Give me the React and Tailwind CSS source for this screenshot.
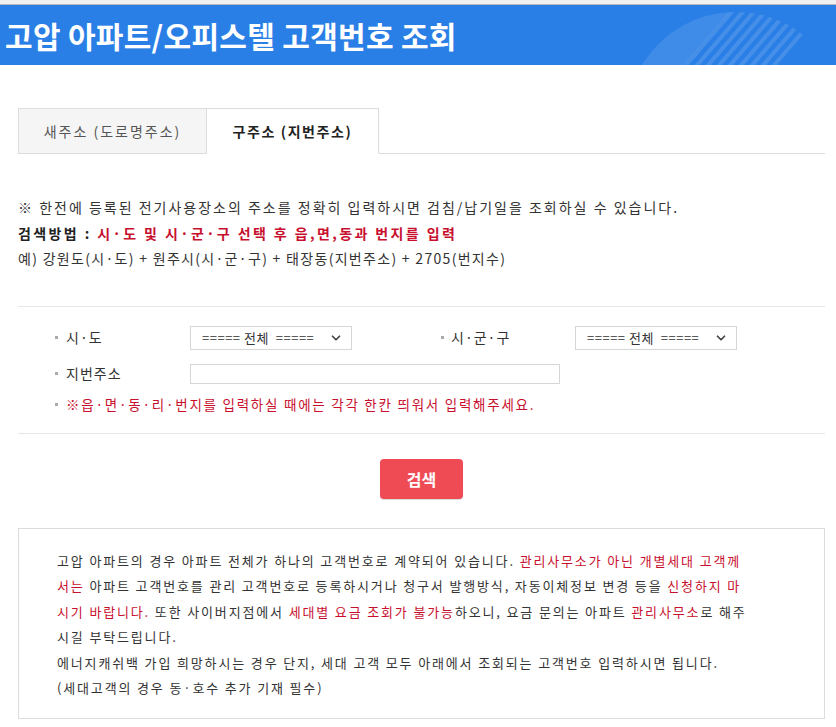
import { ChevronDown } from 'lucide-react';

const FONT = "font-['Noto_Sans_CJK_KR','Noto_Sans',sans-serif]";

// ── Header decoration ─────────────────────────────────────────────────────────
function HeaderDeco() {
  const stripes = [];
  for (let i = 0; i < 9; i++) {
    const x = 742 + i * 11;
    stripes.push(<line key={i} x1={x} y1={0} x2={x - 60} y2={70} stroke="white" strokeOpacity="0.13" strokeWidth="4" />);
  }
  return (
    <svg className="absolute left-0 top-0 pointer-events-none" width="836" height="60" viewBox="0 5 836 60">
      <defs>
        <clipPath id="deco">
          <circle cx="736" cy="122" r="110" />
        </clipPath>
      </defs>
      <g clipPath="url(#deco)">
        <polygon points="600,0 740,0 680,70 600,70" fill="white" fillOpacity="0.1" />
        {stripes}
      </g>
    </svg>
  );
}

function Select() {
  return (
    <div className="w-[162px] h-6 border border-[#d6d6d6] bg-white flex items-center justify-between pl-[11px] pr-[8px] text-[13px] text-[#333]">
      <span className="tracking-[0.5px] whitespace-pre">===== 전체  =====</span>
      <ChevronDown size={14} strokeWidth={3} className="text-[#444]" />
    </div>
  );
}

function Bullet() {
  return <span className="w-[3px] h-[3px] bg-[#aaa] shrink-0" />;
}

const RED = 'text-[#c8102e]';

// ── Main ──────────────────────────────────────────────────────────────────────
export default function App() {
  return (
    <div className={`${FONT} w-[836px] min-h-[727px] bg-white text-[#333]`}>
      {/* ── Header ── */}
      <div className="h-[5px] bg-[#f1f1f1] border-b border-[#b9b9b9]" />
      <div className="relative h-[60px] bg-[#2a7fe6] overflow-hidden flex items-center pl-[5px]">
        <HeaderDeco />
        <h1 className="relative text-[30px] font-bold text-white tracking-[0.3px]">고압 아파트/오피스텔 고객번호 조회</h1>
      </div>

      <div className="ml-[18px] w-[807px]">
        {/* ── Tabs ── */}
        <div className="mt-[43px] flex border-b border-[#dcdcdc]">
          <div className="w-[189px] h-[46px] -mb-px bg-[#f5f5f5] border border-[#dcdcdc] flex items-center justify-center text-[14px] text-[#555] tracking-[2px]">
            새주소 (도로명주소)
          </div>
          <div className="w-[172px] h-[46px] -mb-px bg-white border border-l-0 border-b-white border-[#dcdcdc] flex items-center justify-center text-[14px] font-bold text-[#222] tracking-[1.6px]">
            구주소 (지번주소)
          </div>
        </div>

        {/* ── Intro ── */}
        <div className="mt-[41px] text-[14px] leading-[25.5px] whitespace-nowrap">
          <div className="tracking-[2px]">※ 한전에 등록된 전기사용장소의 주소를 정확히 입력하시면 검침/납기일을 조회하실 수 있습니다.</div>
          <div className="font-bold text-[#222] tracking-[2.4px]">
            검색방법 : <span className={RED}>시·도 및 시·군·구 선택 후 읍,면,동과 번지를 입력</span>
          </div>
          <div className="tracking-[1.3px]">예) 강원도(시·도) + 원주시(시·군·구) + 태장동(지번주소) + 2705(번지수)</div>
        </div>

        {/* ── Form ── */}
        <div className="mt-[34px] border-t border-b border-[#e6e6e6] pt-[19px] pb-[17px] text-[14px]">
          <div className="flex items-center h-6">
            <div className="w-[172px] pl-[37px] flex items-center gap-[8px]">
              <Bullet /><span className="tracking-[1px]">시·도</span>
            </div>
            <Select />
            <div className="w-[223px] pl-[89px] flex items-center gap-[7px]">
              <Bullet /><span className="tracking-[1px]">시·군·구</span>
            </div>
            <Select />
          </div>
          <div className="flex items-center h-5 mt-[14px]">
            <div className="w-[172px] pl-[37px] flex items-center gap-[8px]">
              <Bullet /><span className="tracking-[1px]">지번주소</span>
            </div>
            <div className="w-[370px] h-5 border border-[#d6d6d6] bg-white" />
          </div>
          <div className="flex items-center h-[22px] mt-[10px] pl-[37px] gap-[8px]">
            <Bullet />
            <span className={`${RED} tracking-[1.75px] text-[13.5px] whitespace-nowrap`}>※읍·면·동·리·번지를 입력하실 때에는 각각 한칸 띄워서 입력해주세요.</span>
          </div>
        </div>

        {/* ── Search button ── */}
        <div className="flex justify-center mt-[25px]">
          <button className="w-[83px] h-10 rounded-[4px] bg-[#ef4b55] text-white text-[16px] font-bold shadow-[0_1px_1px_rgba(0,0,0,0.15)]">
            검색
          </button>
        </div>

        {/* ── Notice ── */}
        <div className="mt-[29px] border border-[#dcdcdc] pl-[38px] pt-[19px] pb-[17px] text-[13px] leading-[25.5px] tracking-[1.85px] whitespace-nowrap">
          <div>
            고압 아파트의 경우 아파트 전체가 하나의 고객번호로 계약되어 있습니다. <span className={RED}>관리사무소가 아닌 개별세대 고객께</span>
          </div>
          <div>
            <span className={RED}>서는</span> 아파트 고객번호를 관리 고객번호로 등록하시거나 청구서 발행방식, 자동이체정보 변경 등을 <span className={RED}>신청하지 마</span>
          </div>
          <div>
            <span className={RED}>시기 바랍니다.</span> 또한 사이버지점에서 <span className={RED}>세대별 요금 조회가 불가능</span>하오니, 요금 문의는 아파트 <span className={RED}>관리사무소</span>로 해주
          </div>
          <div>시길 부탁드립니다.</div>
          <div>에너지캐쉬백 가입 희망하시는 경우 단지, 세대 고객 모두 아래에서 조회되는 고객번호 입력하시면 됩니다.</div>
          <div>(세대고객의 경우 동·호수 추가 기재 필수)</div>
        </div>
      </div>
    </div>
  );
}
